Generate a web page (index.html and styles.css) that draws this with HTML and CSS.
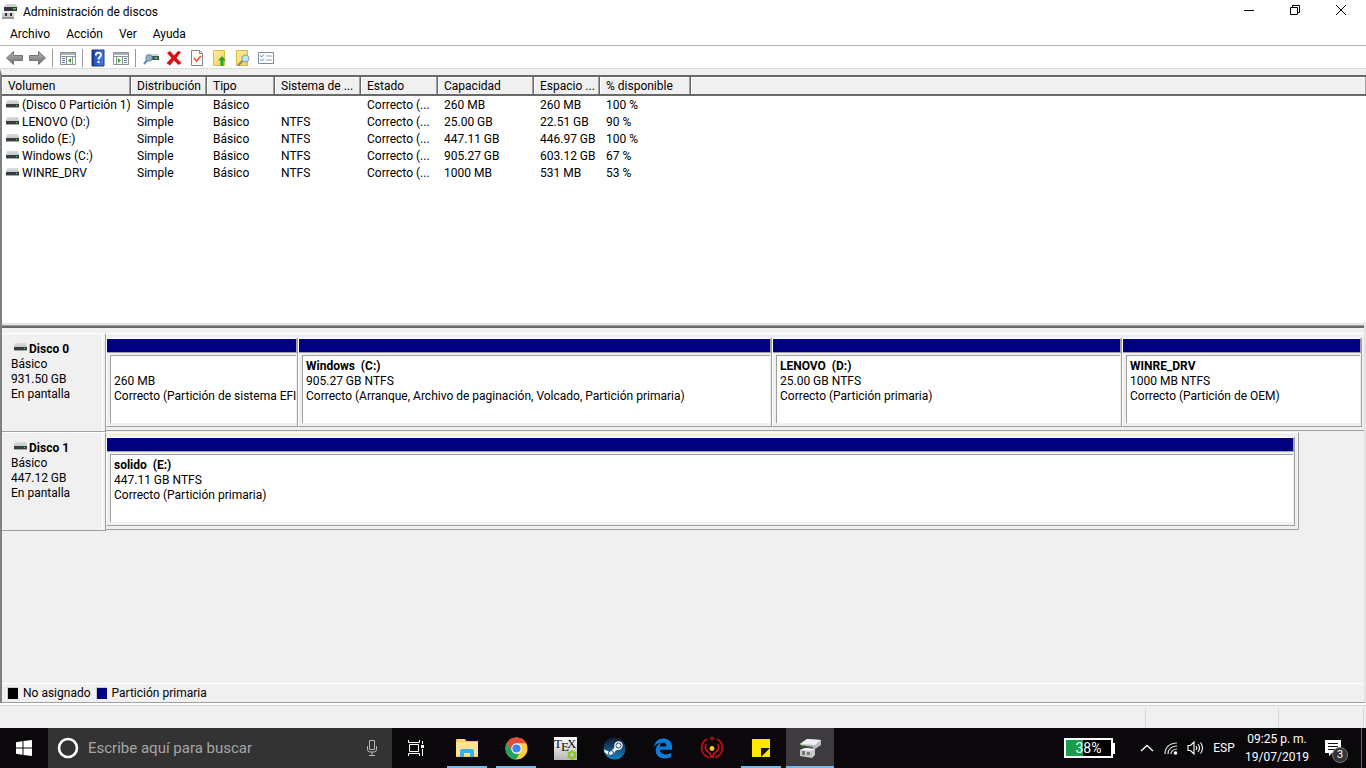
FILE: index.html
```html
<!DOCTYPE html>
<html lang="es">
<head>
<meta charset="utf-8">
<title>Administración de discos</title>
<link rel="stylesheet" href="styles.css">
</head>
<body>
<svg class="defs" aria-hidden="true">
  <defs>
    <linearGradient id="lid" x1="0" y1="0" x2="0" y2="1"><stop offset="0" stop-color="#dadde1"/><stop offset="1" stop-color="#c3c7cb"/></linearGradient>
    <linearGradient id="arrow" x1="0" y1="0" x2="0" y2="1"><stop offset="0" stop-color="#b5b5b5"/><stop offset="1" stop-color="#6f6f6f"/></linearGradient>
    <linearGradient id="note" x1="0" y1="0" x2="1" y2="1"><stop offset="0" stop-color="#fff0a0"/><stop offset="1" stop-color="#f2cf5b"/></linearGradient>
    <linearGradient id="help" x1="0" y1="0" x2="1" y2="0"><stop offset="0" stop-color="#2547b5"/><stop offset="1" stop-color="#4d7be0"/></linearGradient>
    <linearGradient id="steam" x1="0" y1="0" x2="0" y2="1"><stop offset="0" stop-color="#10182f"/><stop offset="1" stop-color="#1584c4"/></linearGradient>
    <linearGradient id="paper" x1="0" y1="0" x2="0" y2="1"><stop offset="0" stop-color="#fff"/><stop offset="1" stop-color="#b8b8b8"/></linearGradient>
    <symbol id="drive" viewBox="0 0 13 8"><path d="M1 0h11l1 4H0z" fill="url(#lid)"/><path d="M0 4h13v3H0z" fill="#3b3e40"/><path d="M0 7h13v1H0z" fill="#a5a8aa"/><path d="M10 5h1v1h-1z" fill="#3cf04a"/></symbol>
  </defs>
</svg>

<header class="titlebar">
  <svg class="app-icon" width="16" height="16" viewBox="0 0 16 16"><path d="M4 0h10l1 3H2z" fill="#cfd2d5"/><path d="M2 3h13v4H2z" fill="#33373a"/><path d="M11 4h3v1.500h-3z" fill="#35d045"/><path d="M0 7h12v7H0z" fill="#c9c9c9"/><path d="M0 7h12v2H0z" fill="#eee"/><path d="M0 13h12v2H0z" fill="#999"/><path d="M3 9h2v3H3zM8 9h2v3H8z" fill="#333"/></svg>
  <h1 class="title">Administración de discos</h1>
  <div class="window-controls">
    <button type="button" aria-label="Minimizar"><svg width="12" height="12" viewBox="0 0 12 12"><path d="M1 6.500h10" stroke="#000"/></svg></button>
    <button type="button" aria-label="Restaurar"><svg width="12" height="12" viewBox="0 0 12 12"><path d="M1.500 3.500h7v7h-7zM3.500 3V1.500h7v7H9" fill="none" stroke="#000"/></svg></button>
    <button type="button" aria-label="Cerrar"><svg width="12" height="12" viewBox="0 0 12 12"><path d="M1 1l10 10M11 1L1 11" stroke="#000"/></svg></button>
  </div>
</header>

<nav class="menubar" aria-label="Menú">
  <button type="button">Archivo</button><button type="button">Acción</button><button type="button">Ver</button><button type="button">Ayuda</button>
</nav>

<div class="toolbar" role="toolbar" aria-label="Herramientas">
  <button type="button" aria-label="Atrás"><svg width="17" height="16" viewBox="0 0 17 16"><path d="M.5 8L7.500 1.500v4h9v5h-9v4z" fill="url(#arrow)" stroke="#737373"/></svg></button>
  <button type="button" aria-label="Adelante"><svg width="17" height="16" viewBox="0 0 17 16"><path d="M16.500 8L9.500 1.500v4h-9v5h9v4z" fill="url(#arrow)" stroke="#737373"/></svg></button>
  <span class="sep"></span>
  <button type="button" aria-label="Mostrar u ocultar árbol"><svg width="16" height="16" viewBox="0 0 16 16"><path d="M.5 2.500h15v12H.5z" fill="#fff" stroke="#8b9197"/><path d="M1 3h14v2H1z" fill="#a7afb7"/><path d="M1 6.500h14M6.500 6v8M12.500 6v8" stroke="#8b9197"/><path d="M2 8.500h3M2 10.500h3M2 12.500h3" stroke="#5e7f9d"/><path d="M11 8v5L8 10.500z" fill="#2ca52c"/></svg></button>
  <span class="sep"></span>
  <button type="button" aria-label="Ayuda"><svg width="16" height="18" viewBox="0 0 16 18"><path d="M2 1h12v16H2z" fill="url(#help)" stroke="#1c3480"/><path d="M3 1v16" stroke="#132b76"/><path d="M5.800 6.500c0-4 5.200-3.500 5.200-.6 0 2-2.500 2.100-2.500 4.600" fill="none" stroke="#fff" stroke-width="1.800"/><path d="M7.500 12h2v2h-2z" fill="#fff"/></svg></button>
  <button type="button" aria-label="Mostrar panel de acciones"><svg width="16" height="16" viewBox="0 0 16 16"><path d="M.5 2.500h15v12H.5z" fill="#fff" stroke="#8b9197"/><path d="M1 3h14v2H1z" fill="#a7afb7"/><path d="M1 6.500h14M3.500 6v8M9.500 6v8" stroke="#8b9197"/><path d="M11 8.500h3M11 10.500h3M11 12.500h3" stroke="#5e7f9d"/><path d="M5 8v5l3-2.500z" fill="#2ca52c"/></svg></button>
  <span class="sep"></span>
  <button type="button" aria-label="Volver a examinar discos"><svg width="16" height="16" viewBox="0 0 16 16"><path d="M4 4h11l1 2H3z" fill="#d2d5d8"/><path d="M3 6h13v4H3z" fill="#4a4f52"/><path d="M12 7h2v2h-2z" fill="#35e045"/><circle cx="6" cy="8" r="3.200" fill="#8fb4cc" stroke="#678ba5"/><path d="M4 10.500L1 14" stroke="#4b8fc4" stroke-width="2"/></svg></button>
  <button type="button" aria-label="Eliminar"><svg width="16" height="16" viewBox="0 0 16 16"><path d="M1 3L4 1 8 5.500l4-4.500L15 2 10.500 8l5 5-3 2L8 10.500 4 15.500.5 13 5.500 8z" fill="#d80f12"/></svg></button>
  <button type="button" aria-label="Propiedades"><svg width="14" height="16" viewBox="0 0 14 16"><path d="M1.500.5h8l3 3v12h-11z" fill="#f8f9fa" stroke="#80868c"/><path d="M9.500.5v3h3" fill="none" stroke="#80868c"/><path d="M4 8l2.500 3L11 6" fill="none" stroke="#f05a28" stroke-width="1.800"/></svg></button>
  <button type="button" aria-label="Subir"><svg width="16" height="16" viewBox="0 0 16 16"><path d="M1.500.5h11v15h-11z" fill="url(#note)" stroke="#ddb945"/><path d="M10 6l4 4.500h-2.500V16h-3v-5.500H6z" fill="#25a52d"/></svg></button>
  <button type="button" aria-label="Buscar"><svg width="16" height="16" viewBox="0 0 16 16"><path d="M1.500.5h11v15h-11z" fill="url(#note)" stroke="#ddb945"/><path d="M7.500 11L3 15.500" stroke="#898171" stroke-width="2"/><circle cx="10.500" cy="8.500" r="3.500" fill="#c3e5f5" stroke="#849baa"/></svg></button>
  <button type="button" aria-label="Lista de opciones"><svg width="16" height="16" viewBox="0 0 16 16"><path d="M.5 2.500h15v11H.5z" fill="#fff" stroke="#7f8b96"/><path d="M8 6h6M8 10h6" stroke="#999"/><path d="M2.500 5.500l1 1.500L6 4.500M2.500 9.500l1 1.500L6 8.500" fill="none" stroke="#3578c9"/></svg></button>
</div>

<main class="workspace">
  <section class="volumes" aria-label="Volúmenes">
    <table>
      <colgroup><col class="c-volume"><col class="c-layout"><col class="c-type"><col class="c-fs"><col class="c-state"><col class="c-size"><col class="c-free"><col class="c-percent"><col></colgroup>
      <thead><tr><th>Volumen</th><th>Distribución</th><th>Tipo</th><th>Sistema de ...</th><th>Estado</th><th>Capacidad</th><th>Espacio ...</th><th>% disponible</th><th></th></tr></thead>
      <tbody>
        <tr><td><svg class="drive"><use href="#drive"/></svg>(Disco 0 Partición 1)</td><td>Simple</td><td>Básico</td><td></td><td>Correcto (...</td><td>260 MB</td><td>260 MB</td><td>100 %</td><td></td></tr>
        <tr><td><svg class="drive"><use href="#drive"/></svg>LENOVO (D:)</td><td>Simple</td><td>Básico</td><td>NTFS</td><td>Correcto (...</td><td>25.00 GB</td><td>22.51 GB</td><td>90 %</td><td></td></tr>
        <tr><td><svg class="drive"><use href="#drive"/></svg>solido (E:)</td><td>Simple</td><td>Básico</td><td>NTFS</td><td>Correcto (...</td><td>447.11 GB</td><td>446.97 GB</td><td>100 %</td><td></td></tr>
        <tr><td><svg class="drive"><use href="#drive"/></svg>Windows (C:)</td><td>Simple</td><td>Básico</td><td>NTFS</td><td>Correcto (...</td><td>905.27 GB</td><td>603.12 GB</td><td>67 %</td><td></td></tr>
        <tr><td><svg class="drive"><use href="#drive"/></svg>WINRE_DRV</td><td>Simple</td><td>Básico</td><td>NTFS</td><td>Correcto (...</td><td>1000 MB</td><td>531 MB</td><td>53 %</td><td></td></tr>
      </tbody>
    </table>
  </section>
  <div class="splitter"></div>
  <section class="disks" aria-label="Discos">
    <article class="disk">
      <div class="disk-info">
        <h2><svg class="drive"><use href="#drive"/></svg>Disco 0</h2>
        <p>Básico</p><p>931.50 GB</p><p>En pantalla</p>
      </div>
      <div class="partitions four">
        <div class="partition"><div class="bar"></div><div class="body"><h3>&nbsp;</h3><p>260 MB</p><p>Correcto (Partición de sistema EFI</p></div></div>
        <div class="partition"><div class="bar"></div><div class="body"><h3>Windows&nbsp; (C:)</h3><p>905.27 GB NTFS</p><p>Correcto (Arranque, Archivo de paginación, Volcado, Partición primaria)</p></div></div>
        <div class="partition"><div class="bar"></div><div class="body"><h3>LENOVO&nbsp; (D:)</h3><p>25.00 GB NTFS</p><p>Correcto (Partición primaria)</p></div></div>
        <div class="partition"><div class="bar"></div><div class="body"><h3>WINRE_DRV</h3><p>1000 MB NTFS</p><p>Correcto (Partición de OEM)</p></div></div>
      </div>
    </article>
    <article class="disk">
      <div class="disk-info">
        <h2><svg class="drive"><use href="#drive"/></svg>Disco 1</h2>
        <p>Básico</p><p>447.12 GB</p><p>En pantalla</p>
      </div>
      <div class="partitions one">
        <div class="partition"><div class="bar"></div><div class="body"><h3>solido&nbsp; (E:)</h3><p>447.11 GB NTFS</p><p>Correcto (Partición primaria)</p></div></div>
      </div>
    </article>
  </section>
  <footer class="legend"><span class="swatch free"></span><span>No asignado</span><span class="swatch primary"></span><span>Partición primaria</span></footer>
</main>
<div class="statusbar"><span class="s-main"></span><span class="s-mid"></span><span class="s-end"></span></div>

<footer class="taskbar">
  <button type="button" class="start" aria-label="Inicio"><svg width="16" height="16" viewBox="0 0 16 16"><path d="M0 2.200L6.500 1.300V7.500H0zM7.500 1.100L16 0v7.500H7.500zM0 8.500h6.500v6.200L0 13.800zM7.500 8.500H16V16l-8.500-1.100z" fill="#fff"/></svg></button>
  <label class="search">
    <svg width="22" height="22" viewBox="0 0 22 22"><circle cx="11" cy="11" r="9" fill="none" stroke="#fff" stroke-width="2.600"/></svg>
    <input type="text" placeholder="Escribe aquí para buscar" aria-label="Buscar">
    <svg width="12" height="18" viewBox="0 0 12 18"><path d="M3.500 1.500h5v9h-5zM1.500 7v3.500q0 2.500 2.500 2.500h4q2.500 0 2.500-2.500V7M6 13v3M3 16.500h6" fill="none" stroke="#b5b5b5"/></svg>
  </label>
  <button type="button" class="taskview" aria-label="Vista de tareas"><svg width="18" height="16" viewBox="0 0 18 16"><path d="M2.500 4.500h9v7h-9zM1.500 0v2.500h11V0M1.500 16v-2.500h11V16M15.500 1v3M15.500 9v7" fill="none" stroke="#fff"/><path d="M14 5h3v3h-3z" fill="#fff"/></svg></button>
  <div class="apps">
    <button type="button" class="open" aria-label="Explorador de archivos"><svg width="22" height="18" viewBox="0 0 22 18"><path d="M0 1q0-1 1-1h8l1.500 2H22v16H0z" fill="#f7c846"/><path d="M0 3h22v14H0z" fill="#ffe391"/><path d="M2 1h6" stroke="#fff2b2"/><path d="M4 18v-6q0-2 2-2h10q2 0 2 2v6h-4v-4H8v4z" fill="#35b3e7"/></svg></button>
    <button type="button" class="open" aria-label="Chrome"><svg width="23" height="23" viewBox="0 0 24 24"><circle cx="12" cy="12" r="11.500" fill="#ffcd41"/><path d="M2 6.300A11.500 11.500 0 0 1 22 6.500H12L7 15z" fill="#e34b3f"/><path d="M2 6.300L7.200 14.800 12 17.400h4.700L11.500 23.500A11.500 11.500 0 0 1 2 6.300z" fill="#1fa463"/><path d="M11.500 23.500L16.700 14.700l3 3z" fill="#ffcd41"/><circle cx="12" cy="12" r="5.400" fill="#fff"/><circle cx="12" cy="12" r="4.300" fill="#4285f4"/></svg></button>
    <button type="button" aria-label="TeX"><svg class="tex" width="23" height="23" viewBox="0 0 23 23"><path d="M0 0h23v23H0z" fill="url(#paper)"/><g fill="#111"><text x="0" y="11">T</text><text x="7" y="14">E</text><text x="13" y="11">X</text></g><circle cx="18" cy="18" r="3" fill="none" stroke="#85c91b" stroke-width="2"/><path d="M18 13v2M18 21v2M13.500 15.500l2 1M20.500 19.500l2 1M13.500 20.500l2-1M20.500 16.500l2-1" stroke="#85c91b" stroke-width="1.500"/></svg></button>
    <button type="button" aria-label="Steam"><svg width="23" height="23" viewBox="0 0 23 23"><circle cx="11.500" cy="11.500" r="11" fill="url(#steam)"/><path d="M.8 12.500l6 2.300 4-3.300 2-5 5 5.500-5 1.500-2.500 4-4 1-4.500-3z" fill="#f5f7fa"/><circle cx="15.500" cy="8.500" r="4.200" fill="#f5f7fa"/><circle cx="15.500" cy="8.500" r="2.500" fill="#f5f7fa" stroke="#244c76"/><circle cx="8" cy="16" r="2.500" fill="none" stroke="#244c76"/></svg></button>
    <button type="button" aria-label="Edge"><svg width="20" height="21" viewBox="0 0 22 22"><path d="M1 9.500C2 3.500 6 0 11.500 0 18 0 21 4.500 21 10v2.500H7.500c.3 3.500 3 5 6.300 5 2.500 0 4.500-.7 6.200-1.800v4.500C18 21.400 15.500 22 13 22c-6 0-10-3.500-10-9 0-4 2.300-6.500 5.500-8C5.500 5 3 6.500 1 9.500zM7.500 8.700h7.300C14.800 6 13.500 4.500 11.300 4.500S8 6 7.500 8.700z" fill="#0a7edb"/></svg></button>
    <button type="button" aria-label="Aplicación"><svg width="24" height="24" viewBox="0 0 24 24"><g fill="none" stroke="#c90d1b"><path d="M7 3A10 10 0 0 0 9 21.500M17 3A10 10 0 0 1 15 21.500" stroke-width="1.600"/><path d="M6 8q-2 5 2 8 3 1 3 6M18 8q2 5-2 8-3 1-3 6" stroke-width="1.800"/><path d="M12 0v5M9.500 2.500h5"/></g><circle cx="12" cy="12.500" r="2.400" fill="#ffc928"/></svg></button>
    <button type="button" class="open" aria-label="Notas rápidas"><svg width="18" height="18" viewBox="0 0 18 18"><path d="M0 0h18v18H0z" fill="#ffe800"/><path d="M9 9h9l-9 9z" fill="#17140b"/></svg></button>
    <button type="button" class="open active" aria-label="Administración de discos"><svg width="24" height="22" viewBox="0 0 24 22"><path d="M2 7l7-5 14 1v5l-6 4L3 9z" fill="#b9bbbc"/><path d="M2 7l7-5 14 1-6 5z" fill="#eee"/><path d="M2 8l13 2v1L3 10z" fill="#3c423e"/><path d="M4 8h3v1H4z" fill="#35c948"/><path d="M2 13l5-2 10 1v6l-3 3-12-2z" fill="#c8c8c8"/><path d="M2 13l5-2 10 1-4 2z" fill="#f3f3f3"/><path d="M4 14h3v4H4zM9 15h3v3H9z" fill="#777"/></svg></button>
  </div>
  <div class="tray">
    <div class="battery"><span class="level"><span class="charge" style="width:38%"></span><span class="value">38%</span></span></div>
    <button type="button" class="tray-icon" aria-label="Mostrar iconos ocultos"><svg width="14" height="8" viewBox="0 0 14 8"><path d="M1 7l6-5.500L13 7" fill="none" stroke="#fff" stroke-width="1.300"/></svg></button>
    <button type="button" class="tray-icon" aria-label="Red"><svg width="14" height="14" viewBox="0 0 14 14"><g fill="none" stroke="#ddd" stroke-width="1.200"><path d="M1 13C1 6 6 2 13 2M4 13c0-5 4-8 9-8M7 13c0-3 3-5 6-5"/></g><circle cx="11.500" cy="12" r="1.800" fill="#fff"/></svg></button>
    <button type="button" class="tray-icon" aria-label="Volumen"><svg width="17" height="14" viewBox="0 0 17 14"><path d="M1 4.500h2.500L7 1v12L3.500 9.500H1zM9 5q1.500 2 0 4M11 3q3 4 0 8M13.500 1.500q4 5.500 0 11" fill="none" stroke="#fff" stroke-width="1.100"/></svg></button>
    <button type="button" class="lang">ESP</button>
    <div class="clock"><time>09:25 p. m.</time><time>19/07/2019</time></div>
    <button type="button" class="notify" aria-label="Notificaciones"><svg width="16" height="17" viewBox="0 0 16 17"><path d="M0 0h16v13H7l-3 3v-3H0z" fill="#fff"/><path d="M3 3.500h10M3 6.500h10M3 9.500h7" stroke="#111"/></svg><span class="badge">3</span></button>
    <button type="button" class="show-desktop" aria-label="Mostrar escritorio"></button>
  </div>
</footer>
</body>
</html>
```

FILE: styles.css
```css
* { box-sizing: border-box; }

body {
  margin: 0;
  height: 100vh;
  display: flex;
  flex-direction: column;
  overflow: hidden;
  background: #fff;
  color: #000;
  font: 12px/15px Roboto, "Open Sans", sans-serif;
}

button {
  display: flex;
  align-items: center;
  justify-content: center;
  flex: none;
  margin: 0;
  padding: 0;
  border: 0;
  background: none;
  color: inherit;
  font: inherit;
}

svg { display: block; flex: none; }
h1, h2, h3, p { margin: 0; font-size: 12px; line-height: 15px; }
h1 { font-weight: 400; }
.defs { position: absolute; width: 0; height: 0; }
.drive { width: 13px; height: 8px; }

/* Window frame */
.titlebar { display: flex; align-items: center; height: 24px; padding: 0 2px; }
.title { flex: 1; margin-left: 5px; }
.window-controls { display: flex; align-self: flex-start; }
.window-controls button { width: 46px; height: 20px; }

.menubar { display: flex; gap: 16px; height: 21px; padding-left: 10px; }
.toolbar {
  display: flex;
  align-items: center;
  height: 24px;
  padding: 1px 0 0 3px;
  border-top: 1px solid #b0b0b8;
  border-bottom: 1px solid #dcdcdc;
}
.toolbar button { width: 23px; height: 22px; }
.sep { width: 7px; height: 18px; border-left: 1px solid #999; margin-left: 3px; margin-right: -3px; }

.workspace {
  flex: 1;
  min-height: 0;
  display: flex;
  flex-direction: column;
  border-style: solid;
  border-color: #a0a0a0 #e3e3e3 #a0a0a0 #808080;
  border-width: 0 2px 1px 2px;
  background: #f0f0f0;
}

/* Volume list */
.volumes { flex: none; height: 253px; margin: 0 -2px; border-left: 2px solid #808080; border-top: 6px solid #f0f0f0; background: #fff; overflow: hidden; }
table { width: 100%; table-layout: fixed; border-collapse: separate; border-spacing: 0; border-top: 2px solid #696969; }
th, td { padding: 1px 0 0 6px; text-align: left; font-weight: 400; white-space: nowrap; overflow: hidden; }
th { height: 19px; padding-top: 2px; border-right: 1px solid #696969; border-bottom: 2px solid #696969; background: #f0f0f0; box-shadow: inset -1px 0 #a0a0a0, inset 1px 1px #fff; }
th:last-child { border-right: 0; }
td { height: 17px; line-height: 16px; }
td:first-child { padding-left: 4px; }
td .drive { display: inline-block; margin-right: 3px; vertical-align: 1px; }
.c-volume { width: 129px; }
.c-layout { width: 76px; }
.c-type { width: 68px; }
.c-fs { width: 86px; }
.c-state { width: 77px; }
.c-size { width: 96px; }
.c-free { width: 66px; }
.c-percent { width: 91px; }
.splitter { flex: none; height: 6px; border-top: 1px solid #fff; border-bottom: 2px solid #696969; background: linear-gradient(#e3e3e3 0 2px, #a0a0a0 2px); }

/* Disk map */
.disks { flex: 1; min-height: 0; padding-top: 5px; }
.disk { display: flex; height: 99px; }
.disk-info { flex: none; width: 104px; height: 99px; padding: 8px 0 0 9px; border-top: 1px solid #fff; border-right: 1px solid #a0a0a0; border-bottom: 1px solid #a0a0a0; box-shadow: inset -2px 0 #f0f0f0, inset -3px 0 #fff; }
.disk-info h2 { display: flex; gap: 2px; padding-left: 3px; }
.disk-info .drive { margin-top: 1px; }
.partitions { display: grid; height: 98px; padding: 4px 2px 3px 0; border-top: 1px solid #fff; border-bottom: 1px solid #a0a0a0; }
.four { flex: 1; grid-template-columns: 192fr 474fr 350fr 240fr; }
.one { width: 87.600%; grid-template-columns: 1fr; border-right: 1px solid #a0a0a0; }
.disk:nth-child(2) .partitions { padding-right: 3px; }
.partition { display: flex; flex-direction: column; min-width: 0; border-right: 1px solid #a0a0a0; border-bottom: 1px solid #a0a0a0; border-left: 1px solid #fff; }
.bar { flex: none; height: 15px; border-top: 1px solid #fff; border-right: 1px solid #a0a0a0; border-bottom: 1px solid #a0a0a0; background: #000080; }
.body { flex: 1; margin: 2px 1px 3px 3px; padding: 3px 0 0 3px; border-top: 1px solid #a0a0a0; border-left: 1px solid #a0a0a0; background: #fff; overflow: hidden; white-space: nowrap; }

.legend { display: flex; align-items: center; height: 19px; padding-left: 5px; gap: 5px; border-top: 1px solid #fff; }
.swatch { width: 11px; height: 12px; border: 1px solid #ccc; border-width: 1px 0 0 1px; }
.free { background: #000; }
.primary { background: #000080; }

.statusbar { flex: none; display: flex; height: 25px; border-top: 2px solid #fff; background: #f0f0f0; box-shadow: inset 0 1px #d7d7d7; padding: 3px 2px 1px 0; }
.statusbar span { border-right: 1px solid #d7d7d7; }
.s-main { flex: 1; }
.s-mid { width: 133px; }
.s-end { width: 85px; }

/* Taskbar */
.taskbar { flex: none; display: flex; height: 40px; background: #0b080c; color: #fff; }
.start { width: 48px; }
.search { display: flex; align-items: center; width: 344px; padding: 0 14px 0 9px; gap: 9px; background: #333; }
.search input { flex: 1; min-width: 0; padding: 0; border: 0; outline: 0; background: none; color: #fff; font: 15px/20px Roboto, "Open Sans", sans-serif; }
.search input::placeholder { color: #a6a6a6; opacity: 1; }
.taskview { width: 48px; }
.apps { display: flex; gap: 1px; margin-left: 3px; }
.apps button { width: 48px; background: linear-gradient(#76b9ed, #76b9ed) no-repeat center bottom / 0 2px; }
.apps .open { background-size: 40px 2px; }
.apps .active { background-color: #3e3b40; background-size: 48px 2px; }
.tex { overflow: visible; font: 13px "Liberation Serif", serif; }
.tray { display: flex; align-items: stretch; margin-left: auto; }
.battery { align-self: center; display: flex; align-items: center; margin-right: 20px; }
.battery::after { content: ""; width: 2px; height: 11px; background: #fff; }
.level { display: flex; width: 49px; height: 20px; border: 2px solid #fff; background: #000; position: relative; }
.charge { background: #199c4c; }
.value { position: absolute; inset: 0; text-align: center; font-size: 14px; line-height: 16px; }
.tray-icon { width: 24px; }
.lang { width: 34px; }
.clock { display: flex; flex-direction: column; justify-content: center; width: 72px; text-align: center; line-height: 18px; }
.notify { width: 48px; padding-right: 8px; position: relative; }
.badge { position: absolute; left: 19px; top: 19px; width: 16px; height: 16px; border: 1px solid #777; border-radius: 50%; background: #333; font-size: 11px; line-height: 14px; }
.show-desktop { width: 5px; border-left: 1px solid #666; }
```
